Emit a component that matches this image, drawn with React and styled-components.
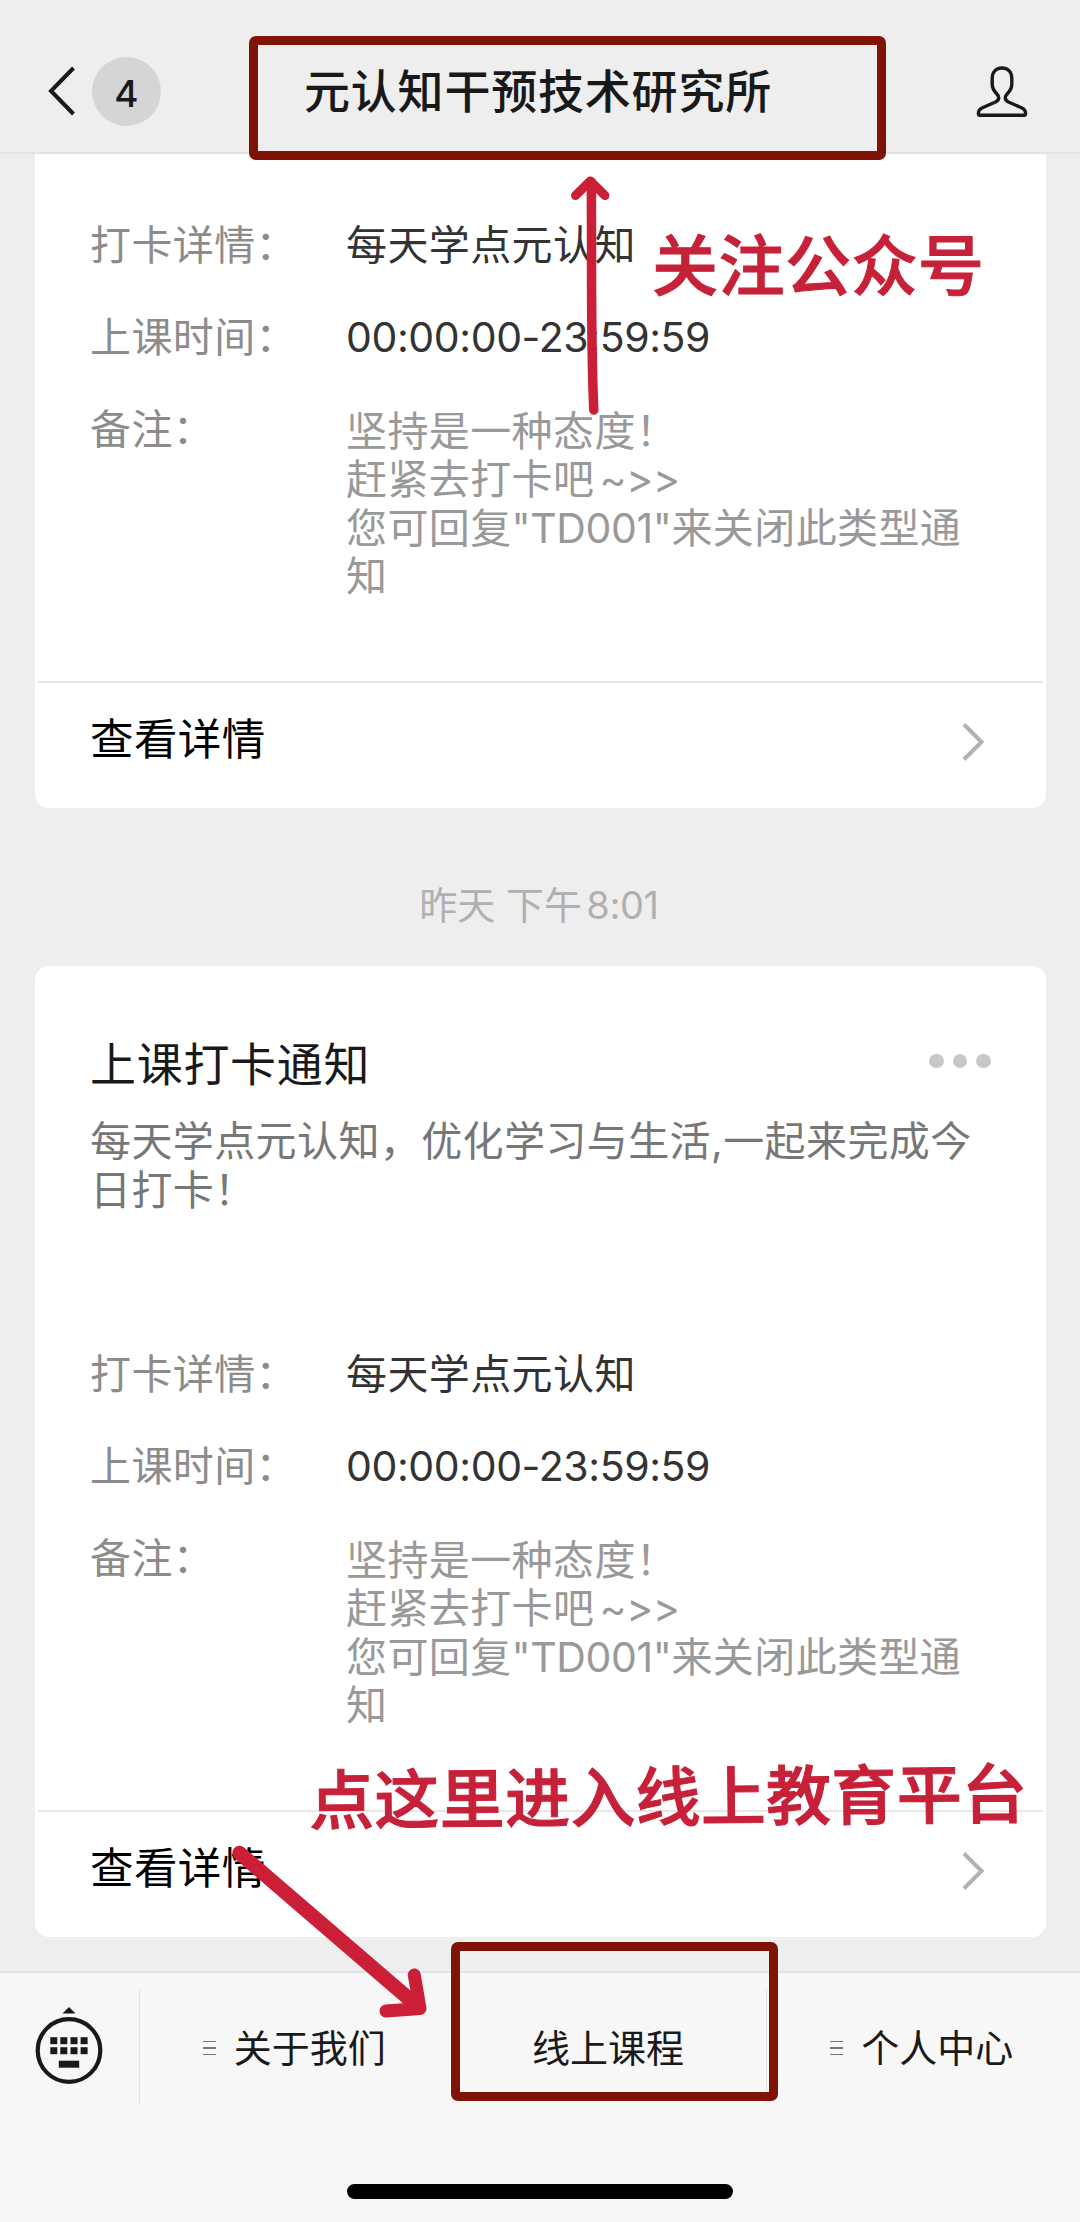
import React from 'react'
import styled, { createGlobalStyle } from 'styled-components'

const details = [
    { label: '打卡详情：', lines: ['每天学点元认知'] },
    { label: '上课时间：', lines: ['00:00:00-23:59:59'] },
    {
        label: '备注：',
        muted: true,
        lines: ['坚持是一种态度！', '赶紧去打卡吧 ~>>', '您可回复"TD001"来关闭此类型通', '知'],
    },
]

const menus = [
    { name: '关于我们', hasSub: true },
    { name: '线上课程', hasSub: false },
    { name: '个人中心', hasSub: true },
]

// latin letters and digits are set a bit tighter than the chinese text
function Mixed({ text }) {
    return text.split(/([\x20-\x7e]+)/).map((part, i) => (i % 2 ? <Latin key={i}>{part}</Latin> : part))
}

function Details() {
    return (
        <DetailList>
            {details.map(item => (
                <DetailRow key={item.label}>
                    <Label>{item.label}</Label>
                    <Value $muted={item.muted}>
                        {item.lines.map(line => (
                            <p key={line}>
                                <Mixed text={line} />
                            </p>
                        ))}
                    </Value>
                </DetailRow>
            ))}
        </DetailList>
    )
}

function MoreLink() {
    return (
        <CardFooter>
            <span>查看详情</span>
            <svg width="24" height="42" viewBox="0 0 24 42" fill="none" stroke="#b2b2b2" strokeWidth="4">
                <path d="M3 3.5 L20.5 21 L3 38.5" />
            </svg>
        </CardFooter>
    )
}

function App() {
    return (
        <>
            <GlobalStyle />
            <Phone>
                <Header>
                    <Back>
                        <svg width="30" height="52" viewBox="0 0 30 52" fill="none" stroke="#191919" strokeWidth="4">
                            <path d="M26.5 3 L4 26 L26.5 49" />
                        </svg>
                        <Count>4</Count>
                    </Back>
                    <Title>元认知干预技术研究所</Title>
                    <svg width="54" height="54" viewBox="0 0 54 54" fill="none" stroke="#191919" strokeWidth="3.4" strokeLinejoin="round">
                        <path d="M27 4 C20.5 4 17.2 8.5 17.2 14.5 V20 C17.2 24.5 19 27 21.5 29.5 C24.8 33 24.5 36 20.5 38 L7.5 43.8 C4.3 45.2 3.4 47 3.4 49.4 C3.4 50.8 4.2 51.3 5.5 51.3 H48.5 C49.8 51.3 50.6 50.8 50.6 49.4 C50.6 47 49.7 45.2 46.5 43.8 L33.5 38 C29.5 36 29.2 33 32.5 29.5 C35 27 36.8 24.5 36.8 20 V14.5 C36.8 8.5 33.5 4 27 4 Z" />
                    </svg>
                </Header>

                <Feed>
                    <Card $cut>
                        <Details />
                        <MoreLink />
                    </Card>
                    <Time>
                        昨天 下午<Latin> 8:01</Latin>
                    </Time>
                    <Card>
                        <CardHead>
                            <h2>上课打卡通知</h2>
                            <Dots>
                                <i />
                                <i />
                                <i />
                            </Dots>
                        </CardHead>
                        <Intro>
                            <p>每天学点元认知，优化学习与生活,一起来完成今</p>
                            <p>日打卡！</p>
                        </Intro>
                        <Details />
                        <MoreLink />
                    </Card>
                </Feed>

                <BottomBar>
                    <MenuRow>
                        <Keyboard>
                            <svg width="72" height="82" viewBox="0 0 72 82">
                                <path d="M36 3 L42.5 9.5 H29.5 Z" fill="#191919" />
                                <circle cx="36" cy="46.5" r="31.3" fill="none" stroke="#191919" strokeWidth="4.2" />
                                <g fill="#191919">
                                    {[17.3, 27.3, 37.5, 47.6].map(x => (
                                        <React.Fragment key={x}>
                                            <rect x={x} y="33.2" width="7" height="7" />
                                            <rect x={x} y="43.2" width="7" height="7" />
                                        </React.Fragment>
                                    ))}
                                    <rect x="25.8" y="56.7" width="20.4" height="7" />
                                </g>
                            </svg>
                        </Keyboard>
                        {menus.map(menu => (
                            <MenuItem key={menu.name}>
                                {menu.hasSub && (
                                    <SubIcon>
                                        <i />
                                        <i />
                                        <i />
                                    </SubIcon>
                                )}
                                {menu.name}
                            </MenuItem>
                        ))}
                    </MenuRow>
                    <HomeIndicator />
                </BottomBar>

                {/* hand-drawn marks on top of the chat */}
                <TitleFrame />
                <MenuFrame />
                <FollowNote>关注公众号</FollowNote>
                <EnterNote>点这里进入线上教育平台</EnterNote>
                <Marks width="1080" height="2222" viewBox="0 0 1080 2222">
                    <path d="M575.5 195.5 L590.3 181 L605 195.5" strokeWidth="9" />
                    <path d="M591.3 182 C592 260 590.5 340 593.8 410" strokeWidth="9.5" />
                    <path d="M239.5 1853 L415 2004" strokeWidth="14.5" />
                    <path d="M414.3 1975 L420 2008.5 L386 2011" strokeWidth="13" />
                </Marks>
            </Phone>
        </>
    )
}

const GlobalStyle = createGlobalStyle`
    *{
        box-sizing: border-box;
        margin: 0;
        padding: 0;
    }
    body{
        background: #ededed;
        font-family: Inter, 'Noto Sans CJK SC', sans-serif;
    }
    svg{
        display: block;
    }
`

const Phone = styled.div`
    position: relative;
    width: 1080px;
    height: 2222px;
    display: flex;
    flex-direction: column;
    overflow: hidden;
    background: #eee;
    color: #191919;
`

const Latin = styled.span`
    letter-spacing: -0.4px;
    word-spacing: -6px;
    white-space: pre;
`

const Header = styled.header`
    height: 154px;
    flex-shrink: 0;
    display: grid;
    grid-template-columns: 200px 1fr 200px;
    align-items: center;
    padding: 30px 0 0;
    border-bottom: 2px solid #e2e2e2;
    > svg{
        justify-self: end;
        margin-right: 51px;
    }
`

const Back = styled.div`
    display: flex;
    align-items: center;
    gap: 15px;
    padding-left: 47px;
`

const Count = styled.span`
    width: 69px;
    height: 69px;
    border-radius: 50%;
    background: #d5d5d5;
    font-size: 37px;
    font-weight: 500;
    line-height: 73px;
    text-align: center;
`

const Title = styled.h1`
    padding-right: 4px;
    font-size: 46px;
    font-weight: 500;
    letter-spacing: 0.8px;
    line-height: 56px;
    text-align: center;
    white-space: nowrap;
`

const Feed = styled.main`
    flex: 1;
    padding: 0 34px 0 35px;
    min-height: 0;
`

const Card = styled.section`
    height: ${props => (props.$cut ? '654px' : '971px')};
    display: flex;
    flex-direction: column;
    padding-top: ${props => (props.$cut ? '67px' : '70px')};
    background: #fff;
    border-radius: ${props => (props.$cut ? '0 0 14px 14px' : '14px')};
`

const CardHead = styled.div`
    display: flex;
    align-items: center;
    justify-content: space-between;
    padding: 0 55px;
    h2{
        font-size: 46px;
        font-weight: 400;
        letter-spacing: 0.7px;
        line-height: 56px;
    }
`

const Dots = styled.div`
    display: flex;
    gap: 9px;
    margin-top: -6px;
    i{
        width: 14.6px;
        height: 14.6px;
        border-radius: 50%;
        background: #c8c8ca;
    }
`

const Intro = styled.div`
    height: 196px;
    margin: 25px 0 37px;
    padding-left: 55px;
    flex-shrink: 0;
    color: #777;
    font-size: 41px;
    letter-spacing: 0.4px;
    line-height: 49px;
    white-space: nowrap;
`

const DetailList = styled.div`
    flex: 1;
    display: flex;
    flex-direction: column;
    gap: 43.6px;
    padding-left: 55px;
    font-size: 41px;
    letter-spacing: 0.4px;
    line-height: 48.4px;
`

const DetailRow = styled.div`
    display: flex;
`

const Label = styled.span`
    width: 256px;
    flex-shrink: 0;
    color: #8c8c8c;
`

const Value = styled.div`
    color: ${props => (props.$muted ? '#999' : '#333')};
    padding-top: ${props => (props.$muted ? '2px' : '0')};
    white-space: pre;
`

const CardFooter = styled.footer`
    height: 127px;
    display: flex;
    justify-content: space-between;
    margin: 0 3px;
    padding: 28px 58px 0 52px;
    border-top: 2px solid #e7e7e7;
    color: #000;
    font-size: 43.5px;
    letter-spacing: 0.4px;
    line-height: 56px;
    svg{
        margin-top: 10px;
    }
`

const Time = styled.p`
    height: 158px;
    padding: 72px 3px 0 0;
    color: #b0b0b0;
    font-size: 38px;
    line-height: 50px;
    text-align: center;
`

const BottomBar = styled.nav`
    height: 251px;
    flex-shrink: 0;
    display: flex;
    flex-direction: column;
    align-items: center;
    border-top: 2px solid #e2e2e2;
    background: #f7f7f7;
`

const MenuRow = styled.div`
    width: 100%;
    height: 114px;
    display: flex;
    margin-top: 17px;
`

const Keyboard = styled.div`
    width: 139px;
    padding: 14px 0 0 33px;
`

const MenuItem = styled.div`
    flex: 1;
    display: flex;
    align-items: center;
    justify-content: center;
    gap: 18px;
    padding: 2px 4px 0 0;
    border-left: 1px solid #e0e0e0;
    font-size: 38px;
    line-height: 50px;
`

const SubIcon = styled.span`
    display: flex;
    flex-direction: column;
    gap: 5px;
    i{
        width: 13px;
        height: 1.5px;
        background: #777;
    }
`

const HomeIndicator = styled.div`
    width: 386px;
    height: 15px;
    margin-top: 80px;
    border-radius: 8px;
    background: #000;
`

const Frame = styled.div`
    position: absolute;
    border: 9px solid #7f1305;
    border-radius: 7px;
`

const TitleFrame = styled(Frame)`
    left: 249px;
    top: 36px;
    width: 637px;
    height: 124px;
`

const MenuFrame = styled(Frame)`
    left: 451px;
    top: 1942px;
    width: 327px;
    height: 159px;
`

const Note = styled.p`
    position: absolute;
    color: #c62139;
    font-weight: 500;
    white-space: nowrap;
    -webkit-text-stroke: 1px #c62139;
`

const FollowNote = styled(Note)`
    left: 652px;
    top: 226px;
    font-size: 66px;
    letter-spacing: 0.5px;
    line-height: 80px;
`

const EnterNote = styled(Note)`
    left: 309px;
    top: 1758px;
    font-size: 65px;
    letter-spacing: 0.3px;
    line-height: 80px;
    transform: rotate(-0.55deg);
`

const Marks = styled.svg`
    position: absolute;
    left: 0;
    top: 0;
    fill: none;
    stroke: #cb1e37;
    stroke-linecap: round;
    stroke-linejoin: round;
    pointer-events: none;
`

export default App
